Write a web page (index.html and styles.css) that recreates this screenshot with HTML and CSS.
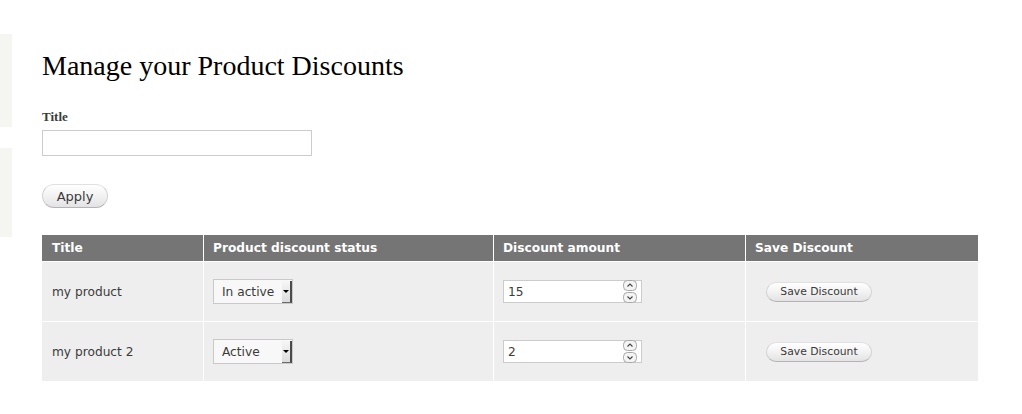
FILE: index.html
```html
<!DOCTYPE html>
<html lang="en">
<head>
<meta charset="utf-8">
<title>Manage your Product Discounts</title>
<link rel="stylesheet" href="styles.css">
</head>
<body>
<div class="page">
  <aside class="sidebar">
    <div class="strip strip-one"></div>
    <div class="strip strip-two"></div>
  </aside>
  <main class="main">
    <h1 class="page-title">Manage your Product Discounts</h1>
    <form class="filter">
      <label class="field-label" for="title">Title</label>
      <input class="text-input" id="title" type="text">
      <div class="actions">
        <button class="btn btn-apply" type="button">Apply</button>
      </div>
    </form>
    <table class="discounts">
      <colgroup>
        <col class="c-title">
        <col class="c-status">
        <col class="c-amount">
        <col class="c-save">
      </colgroup>
      <thead>
        <tr>
          <th>Title</th>
          <th>Product discount status</th>
          <th>Discount amount</th>
          <th>Save Discount</th>
        </tr>
      </thead>
      <tbody>
        <tr>
          <td>my product</td>
          <td>
            <span class="select">
              <select class="select-native"><option>In active</option><option>Active</option></select>
              <span class="select-arrow"></span>
            </span>
          </td>
          <td>
            <span class="number">
              <input class="number-input" type="text" value="15">
              <span class="spin">
                <svg class="spin-btn" width="14" height="11" viewBox="0 0 14 11"><rect x="0.5" y="0.5" width="13" height="10" rx="4" fill="#f4f4f4" stroke="#a9a9a9"/><polyline points="4.5,6.5 7,4 9.5,6.5" fill="none" stroke="#444" stroke-width="1.1"/></svg>
                <svg class="spin-btn" width="14" height="11" viewBox="0 0 14 11"><rect x="0.5" y="0.5" width="13" height="10" rx="4" fill="#f4f4f4" stroke="#a9a9a9"/><polyline points="4.5,4.5 7,7 9.5,4.5" fill="none" stroke="#444" stroke-width="1.1"/></svg>
              </span>
            </span>
          </td>
          <td><button class="btn btn-save" type="button">Save Discount</button></td>
        </tr>
        <tr>
          <td>my product 2</td>
          <td>
            <span class="select">
              <select class="select-native"><option>Active</option><option>In active</option></select>
              <span class="select-arrow"></span>
            </span>
          </td>
          <td>
            <span class="number">
              <input class="number-input" type="text" value="2">
              <span class="spin">
                <svg class="spin-btn" width="14" height="11" viewBox="0 0 14 11"><rect x="0.5" y="0.5" width="13" height="10" rx="4" fill="#f4f4f4" stroke="#a9a9a9"/><polyline points="4.5,6.5 7,4 9.5,6.5" fill="none" stroke="#444" stroke-width="1.1"/></svg>
                <svg class="spin-btn" width="14" height="11" viewBox="0 0 14 11"><rect x="0.5" y="0.5" width="13" height="10" rx="4" fill="#f4f4f4" stroke="#a9a9a9"/><polyline points="4.5,4.5 7,7 9.5,4.5" fill="none" stroke="#444" stroke-width="1.1"/></svg>
              </span>
            </span>
          </td>
          <td><button class="btn btn-save" type="button">Save Discount</button></td>
        </tr>
      </tbody>
    </table>
  </main>
</div>
</body>
</html>
```
FILE: styles.css
```css
html, body {
  margin: 0;
  padding: 0;
  background: #fff;
}
body {
  font-family: "DejaVu Sans", sans-serif;
  color: #3b3b3b;
  font-size: 12px;
}
.page {
  display: flex;
  align-items: flex-start;
}
.sidebar {
  width: 12px;
  flex: none;
  display: flex;
  flex-direction: column;
  padding-top: 34px;
  gap: 21px;
}
.strip {
  background: #f5f5f1;
}
.strip-one { height: 93px; }
.strip-two { height: 89px; }

.main {
  margin-left: 30px;
}
.page-title {
  font-family: "Liberation Serif", serif;
  font-weight: normal;
  font-size: 28px;
  line-height: 34px;
  color: #000;
  margin: 49px 0 0;
}
.filter {
  display: flex;
  flex-direction: column;
  align-items: flex-start;
  margin: 26px 0 0;
}
.field-label {
  font-family: "Liberation Serif", serif;
  font-weight: bold;
  font-size: 13px;
  line-height: 16px;
  color: #3b3b3b;
}
.text-input {
  margin: 5px 0 0;
  box-sizing: border-box;
  width: 270px;
  height: 26px;
  border: 1px solid #cccccc;
  background: #fff;
  padding: 0 4px;
}
.actions {
  margin-top: 28px;
}
.btn {
  font-family: "DejaVu Sans", sans-serif;
  color: #3a3a3a;
  background: linear-gradient(#ffffff, #f2f2f2 50%, #e3e3e3);
  border: 1px solid #d2d2d2;
  border-top-color: #e0e0e0;
  border-bottom-color: #b4b4b4;
  border-radius: 14px;
  box-sizing: border-box;
  cursor: pointer;
  margin: 0;
}
.btn-apply {
  display: block;
  width: 66px;
  height: 24px;
  font-size: 13px;
  padding: 0;
  line-height: 21px;
}
.btn-save {
  width: 106px;
  height: 20px;
  font-size: 10.8px;
  padding: 0;
  line-height: 17px;
  margin-left: 11px;
}

.discounts {
  margin-top: 27px;
  width: 936px;
  table-layout: fixed;
  border-collapse: separate;
  border-spacing: 0;
}
.c-title { width: 161px; }
.c-status { width: 290px; }
.c-amount { width: 252px; }
.c-save { width: 233px; }

.discounts th {
  background: #757575;
  color: #fff;
  font-weight: bold;
  font-size: 12.2px;
  line-height: 14px;
  text-align: left;
  padding: 6px 10px;
}
.discounts th + th,
.discounts td + td {
  border-left: 1px solid #fff;
  padding-left: 9px;
}
.discounts td {
  background: #eeeeee;
  border-top: 1px solid #fff;
  padding: 17px 10px 17px 10px;
  font-size: 12.2px;
  line-height: 14px;
  vertical-align: middle;
}

.select {
  display: inline-flex;
  align-items: center;
  box-sizing: border-box;
  width: 80px;
  height: 25px;
  border: 1px solid #c9c9c9;
  background: #f8f8f8;
  vertical-align: middle;
}
.select-native {
  appearance: none;
  -webkit-appearance: none;
  border: none;
  background: transparent;
  font-family: "DejaVu Sans", sans-serif;
  font-size: 12.2px;
  color: #3b3b3b;
  padding: 0 0 0 8px;
  margin: 0;
  flex: 1;
  min-width: 0;
  height: 23px;
  outline: none;
}
.select-arrow {
  flex: none;
  box-sizing: border-box;
  width: 10px;
  height: 22px;
  background: linear-gradient(#f6f6f6, #dcdcdc);
  border-right: 2px solid #4a4a4a;
  border-bottom: 1px solid #6a6a6a;
  display: flex;
  align-items: center;
  justify-content: center;
}
.select-arrow::after {
  content: "";
  border-left: 3px solid transparent;
  border-right: 3px solid transparent;
  border-top: 3px solid #000;
}

.number {
  display: inline-flex;
  align-items: center;
  box-sizing: border-box;
  width: 139px;
  height: 23px;
  border: 1px solid #cccccc;
  background: #fff;
  vertical-align: middle;
}
.number-input {
  flex: 1;
  min-width: 0;
  border: none;
  outline: none;
  background: transparent;
  font-family: "DejaVu Sans", sans-serif;
  font-size: 12.2px;
  color: #3b3b3b;
  padding: 0 0 0 4px;
  margin: 0;
  height: 21px;
}
.spin {
  flex: none;
  display: flex;
  flex-direction: column;
  gap: 1px;
  margin-right: 4px;
}
.spin-btn {
  display: block;
}
```
